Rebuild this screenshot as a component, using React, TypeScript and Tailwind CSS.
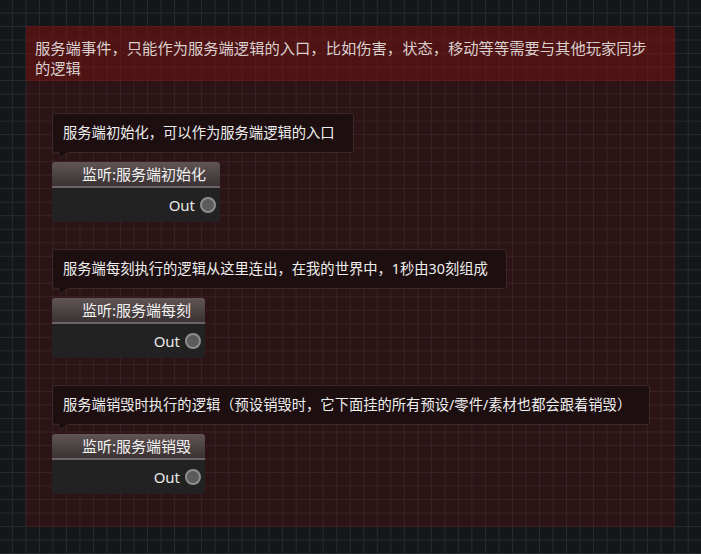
import React from 'react';

const FONT = "font-['Noto_Sans','Noto_Sans_CJK_SC',sans-serif]";

type Item = { comment: string; title: string };

const items: Item[] = [
  { comment: '服务端初始化，可以作为服务端逻辑的入口', title: '监听:服务端初始化' },
  { comment: '服务端每刻执行的逻辑从这里连出，在我的世界中，1秒由30刻组成', title: '监听:服务端每刻' },
  { comment: '服务端销毁时执行的逻辑（预设销毁时，它下面挂的所有预设/零件/素材也都会跟着销毁）', title: '监听:服务端销毁' },
];

function Comment({ text }: { text: string }) {
  return (
    <div className="relative w-fit">
      <div className="h-[40px] flex items-center pl-[10px] pr-[18px] rounded-[3px] border border-[#3b2828] bg-[#1c0e0f]/90">
        <span className="text-[14.3px] leading-[20px] text-[#eeeeee] whitespace-nowrap">{text}</span>
      </div>
      {/* little speech tail */}
      <svg className="absolute left-[6px] top-[39px]" width="10" height="7" viewBox="0 0 10 7">
        <polygon points="0,0 10,0 2,6.5" fill="#1c0e0f" />
        <polyline points="0.5,0 2,6.5 9.5,0.5" fill="none" stroke="#3b2828" strokeWidth="1" />
      </svg>
    </div>
  );
}

function EventNode({ title }: { title: string }) {
  return (
    <div className="w-fit rounded-[3px] overflow-hidden">
      <div className="h-[26px] pl-[30px] pr-[14px] flex items-center bg-gradient-to-b from-[#605556] to-[#3a3233] border-b-2 border-[#6d6363]">
        <span className="text-[15px] leading-[20px] text-[#f2f2f2] whitespace-nowrap">{title}</span>
      </div>
      <div className="h-[34px] bg-[#222222] flex items-center justify-end pr-[4px] gap-[5px]">
        <span className="text-[15px] leading-[20px] text-[#e8e8e8]">Out</span>
        <div className="w-[16px] h-[16px] rounded-full bg-[#5b5b5b] border-2 border-[#8e8e8e]" />
      </div>
    </div>
  );
}

export default function App() {
  return (
    <div
      className={`${FONT} w-[701px] h-[554px] overflow-hidden pt-[26px] pl-[26px] bg-[#141619] bg-[linear-gradient(to_right,#282b2e_1px,transparent_1px),linear-gradient(to_bottom,#282b2e_1px,transparent_1px)] bg-[size:13.53px_13.53px] bg-[position:11.9px_12.5px]`}
    >
      {/* Group panel */}
      <div className="w-[649px] rounded-tr-[4px] bg-[rgba(101,13,15,0.3)]">
        <div className="h-[55px] px-[9px] pt-[12px] rounded-tr-[4px] bg-[rgba(130,18,16,0.42)]">
          <p className="text-[15.3px] leading-[20px] text-[#d9d0d0] whitespace-nowrap">
            服务端事件，只能作为服务端逻辑的入口，比如伤害，状态，移动等等需要与其他玩家同步
            <br />
            的逻辑
          </p>
        </div>

        <div className="pl-[26px] pt-[32px] pb-[33px] flex flex-col gap-[27px]">
          {items.map((it) => (
            <div key={it.title} className="flex flex-col gap-[9px]">
              <Comment text={it.comment} />
              <EventNode title={it.title} />
            </div>
          ))}
        </div>
      </div>
    </div>
  );
}
